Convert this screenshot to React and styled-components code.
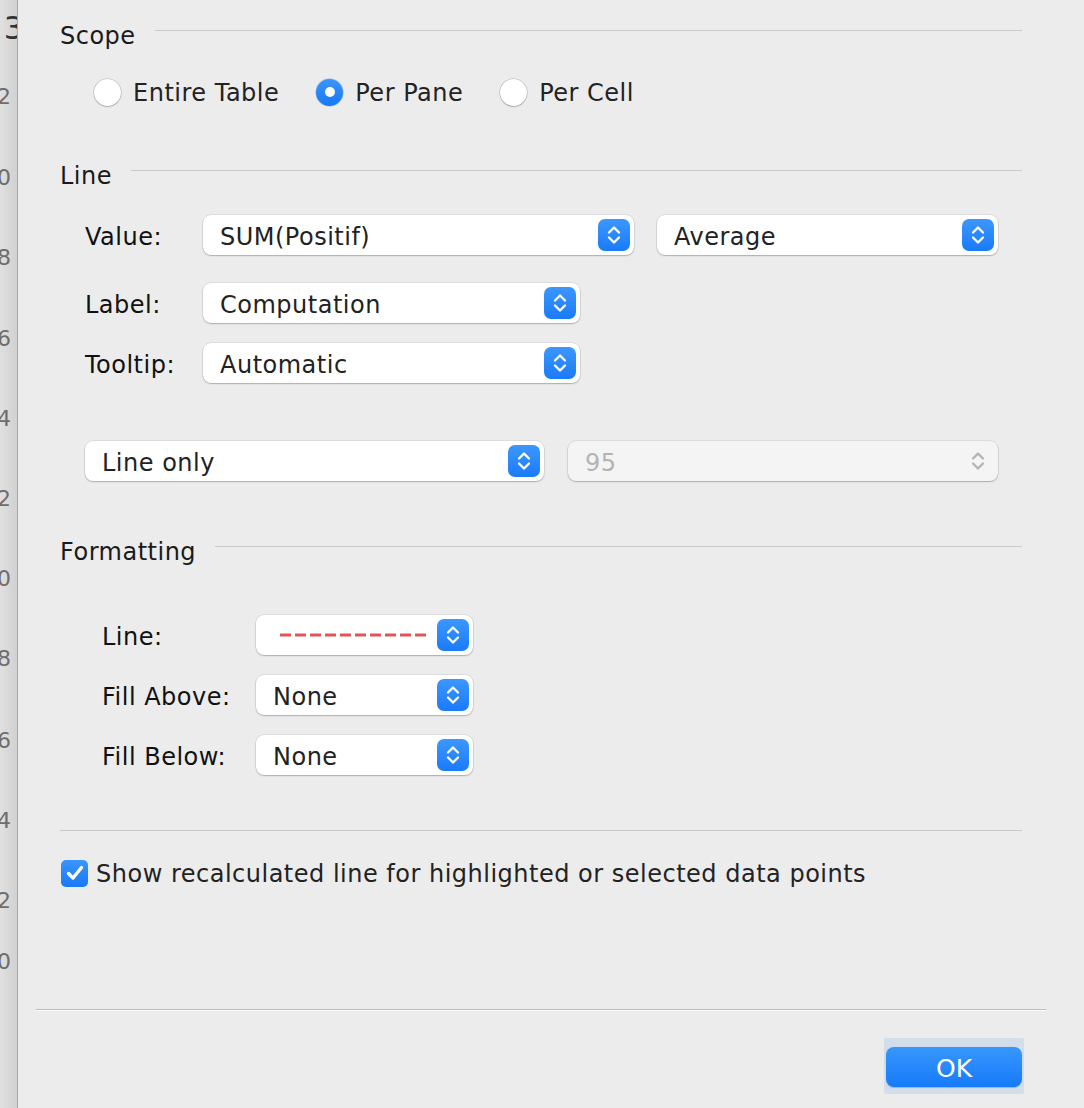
import React from "react";
import styled, { createGlobalStyle } from "styled-components";

const Global = createGlobalStyle`
  html, body { margin: 0; padding: 0; background: #ececec; overflow: hidden; }
  body { font-family: "DejaVu Sans", "Noto Sans", sans-serif; -webkit-font-smoothing: antialiased; }
  #root { height: 1108px; }
`;

const Page = styled.div`
  display: flex;
  width: 1084px;
  height: 1108px;
  background: #ececec;
  letter-spacing: 0.5px;
`;

const Strip = styled.div`
  position: relative;
  flex: none;
  width: 17px;
  height: 100%;
  overflow: hidden;
  background: linear-gradient(to right, #e0e0e0, #d1d1d1);
  border-right: 1px solid #a9a9a9;
  letter-spacing: 0;
`;

const Tick = styled.span`
  position: absolute;
  right: ${(p) => (p.$big ? "-7px" : "6px")};
  font-size: ${(p) => (p.$big ? "32px" : "22px")};
  line-height: 26px;
  color: ${(p) => (p.$big ? "#333" : "#6d6d6d")};
`;

const Main = styled.div`
  flex: 1;
  display: flex;
  flex-direction: column;
  padding-top: 21px;
`;

const Content = styled.div`
  display: flex;
  flex-direction: column;
  padding: 0 62px 0 42px;
`;

const Heading = styled.div`
  box-sizing: border-box;
  display: flex;
  align-items: center;
  gap: 19px;
  height: 28px;
  padding-top: 1px;
  margin-top: ${(p) => p.$mt || 0}px;
  font-size: 24px;
  color: #1a1a1a;
  white-space: nowrap;
`;

const HeadRule = styled.div`
  flex: 1;
  height: 0;
  border-top: 1px solid #c9c9c9;
  margin-bottom: 10px;
`;

const RadioRow = styled.div`
  display: flex;
  align-items: center;
  gap: 37px;
  height: 28px;
  margin-top: 29px;
  padding-left: 34px;
`;

const RadioItem = styled.label`
  display: flex;
  align-items: center;
  gap: 12px;
  font-size: 24px;
  color: #222;
`;

const RadioText = styled.span`
  padding-top: 2px;
`;

const RadioDot = styled.span`
  box-sizing: border-box;
  width: 27px;
  height: 27px;
  border-radius: 50%;
  display: flex;
  align-items: center;
  justify-content: center;
  background: ${(p) =>
    p.$on ? "linear-gradient(#3a95fc, #1878f6)" : "#fff"};
  box-shadow: ${(p) =>
    p.$on
      ? "0 0 0 0.5px rgba(20,100,220,0.4)"
      : "0 0 0 0.5px rgba(0,0,0,0.22), 0 1px 1.5px rgba(0,0,0,0.18)"};
  &::after {
    content: "";
    display: ${(p) => (p.$on ? "block" : "none")};
    width: 10px;
    height: 10px;
    border-radius: 50%;
    background: #fff;
  }
`;

const FieldRow = styled.div`
  display: flex;
  align-items: center;
  gap: ${(p) => p.$gap || 0}px;
  margin-top: ${(p) => p.$mt || 0}px;
  padding-left: ${(p) => p.$indent}px;
`;

const FieldLabel = styled.div`
  width: ${(p) => p.$w}px;
  flex: none;
  padding-top: 3px;
  font-size: 24px;
  color: #111;
`;

const SelectBox = styled.div`
  box-sizing: border-box;
  width: ${(p) => p.$w}px;
  height: 40px;
  flex: none;
  display: flex;
  align-items: center;
  padding-left: ${(p) => p.$pl || 17}px;
  padding-right: 4px;
  border-radius: 8px;
  background: ${(p) => (p.$disabled ? "#f4f4f4" : "#fff")};
  box-shadow: 0 0 0 0.5px rgba(0, 0, 0, 0.13), 0 1px 1.5px rgba(0, 0, 0, 0.22);
  font-size: 24px;
  color: ${(p) => (p.$disabled ? "#b3b3b3" : "#222")};
`;

const SelectText = styled.div`
  flex: 1;
  padding-top: 3px;
  white-space: nowrap;
  overflow: hidden;
`;

const Stepper = styled.div`
  flex: none;
  width: 32px;
  height: 32px;
  border-radius: 7px;
  display: flex;
  align-items: center;
  justify-content: center;
  background: ${(p) =>
    p.$disabled ? "transparent" : "linear-gradient(#3c97fd, #1a7bf9)"};
`;

const Separator = styled.div`
  height: 0;
  border-top: 1px solid #c8c8c8;
  margin-top: ${(p) => p.$mt}px;
`;

const CheckRow = styled.label`
  display: flex;
  align-items: center;
  gap: 8px;
  height: 28px;
  margin-top: 28px;
  padding-left: 1px;
  font-size: 24px;
  color: #222;
  white-space: nowrap;
`;

const CheckBox = styled.span`
  width: 27px;
  height: 27px;
  border-radius: 5px;
  background: linear-gradient(#3a95fc, #1878f6);
  display: flex;
  align-items: center;
  justify-content: center;
`;

const FooterRule = styled.div`
  margin: 122px 38px 0 18px;
  height: 0;
  border-top: 1px solid #bdbdbd;
  border-bottom: 1px solid #fbfbfb;
`;

const Footer = styled.div`
  display: flex;
  justify-content: flex-end;
  padding-right: 60px;
  margin-top: 27px;
`;

const FocusHalo = styled.div`
  padding: 9px 2px 7px 2px;
  background: #d3deeb;
  border-radius: 2px;
`;

const OkButton = styled.button`
  width: 136px;
  height: 40px;
  border: none;
  border-radius: 8px;
  background: linear-gradient(#3896fc, #167bfa);
  color: #fff;
  font-family: "DejaVu Sans", sans-serif;
  font-size: 25px;
  padding: 2px 0 0;
  box-shadow: 0 0.5px 1px rgba(0, 0, 0, 0.2);
`;

const Chevrons = ({ color = "#fff" }) => (
  <svg width="16" height="24" viewBox="0 0 16 24" fill="none">
    <path d="M3 9.5 L8 4.5 L13 9.5" stroke={color} strokeWidth="2.3" strokeLinecap="round" strokeLinejoin="round" />
    <path d="M3 14.5 L8 19.5 L13 14.5" stroke={color} strokeWidth="2.3" strokeLinecap="round" strokeLinejoin="round" />
  </svg>
);

const Select = ({ w, children, disabled, pl }) => (
  <SelectBox $w={w} $disabled={disabled} $pl={pl}>
    <SelectText>{children}</SelectText>
    <Stepper $disabled={disabled}>
      <Chevrons color={disabled ? "#b4b4b4" : "#fff"} />
    </Stepper>
  </SelectBox>
);

const ticks = [
  { t: "3", y: 28, big: true },
  { t: "2", y: 97 },
  { t: "0", y: 178 },
  { t: "8", y: 258 },
  { t: "6", y: 339 },
  { t: "4", y: 419 },
  { t: "2", y: 499 },
  { t: "0", y: 579 },
  { t: "8", y: 659 },
  { t: "6", y: 741 },
  { t: "4", y: 821 },
  { t: "2", y: 901 },
  { t: "0", y: 962 },
];

export default function App() {
  return (
    <>
      <Global />
      <Page>
        <Strip>
          {ticks.map((k, i) => (
            <Tick key={i} $big={k.big} style={{ top: k.y - 13 }}>
              {k.t}
            </Tick>
          ))}
        </Strip>
        <Main>
          <Content>
            <Heading>
              Scope
              <HeadRule />
            </Heading>
            <RadioRow>
              <RadioItem>
                <RadioDot />
                <RadioText>Entire Table</RadioText>
              </RadioItem>
              <RadioItem>
                <RadioDot $on />
                <RadioText>Per Pane</RadioText>
              </RadioItem>
              <RadioItem>
                <RadioDot />
                <RadioText>Per Cell</RadioText>
              </RadioItem>
            </RadioRow>

            <Heading $mt={55}>
              Line
              <HeadRule />
            </Heading>
            <FieldRow $indent={25} $mt={26} $gap={0}>
              <FieldLabel $w={118}>Value:</FieldLabel>
              <Select w={431}>SUM(Positif)</Select>
              <FieldRow $indent={23}>
                <Select w={341}>Average</Select>
              </FieldRow>
            </FieldRow>
            <FieldRow $indent={25} $mt={28}>
              <FieldLabel $w={118}>Label:</FieldLabel>
              <Select w={377}>Computation</Select>
            </FieldRow>
            <FieldRow $indent={25} $mt={20}>
              <FieldLabel $w={118}>Tooltip:</FieldLabel>
              <Select w={377}>Automatic</Select>
            </FieldRow>
            <FieldRow $indent={25} $mt={58} $gap={24}>
              <Select w={459}>Line only</Select>
              <Select w={430} disabled>
                95
              </Select>
            </FieldRow>

            <Heading $mt={56}>
              Formatting
              <HeadRule />
            </Heading>
            <FieldRow $indent={42} $mt={50}>
              <FieldLabel $w={154}>Line:</FieldLabel>
              <Select w={217} pl={24}>
                <svg width="148" height="6" viewBox="0 0 148 6" style={{ display: "block", marginTop: -3 }}>
                  <line x1="0" y1="3" x2="146" y2="3" stroke="#e05656" strokeWidth="3" strokeDasharray="11 4" />
                </svg>
              </Select>
            </FieldRow>
            <FieldRow $indent={42} $mt={20}>
              <FieldLabel $w={154}>Fill Above:</FieldLabel>
              <Select w={217}>None</Select>
            </FieldRow>
            <FieldRow $indent={42} $mt={20}>
              <FieldLabel $w={154}>Fill Below:</FieldLabel>
              <Select w={217}>None</Select>
            </FieldRow>

            <Separator $mt={55} />
            <CheckRow>
              <CheckBox>
                <svg width="18" height="16" viewBox="0 0 18 16" fill="none">
                  <path d="M2.5 8.5 L7 13 L15.5 2.5" stroke="#fff" strokeWidth="3.4" strokeLinecap="round" strokeLinejoin="round" />
                </svg>
              </CheckBox>
              <RadioText>Show recalculated line for highlighted or selected data points</RadioText>
            </CheckRow>
          </Content>
          <FooterRule />
          <Footer>
            <FocusHalo>
              <OkButton>OK</OkButton>
            </FocusHalo>
          </Footer>
        </Main>
      </Page>
    </>
  );
}
